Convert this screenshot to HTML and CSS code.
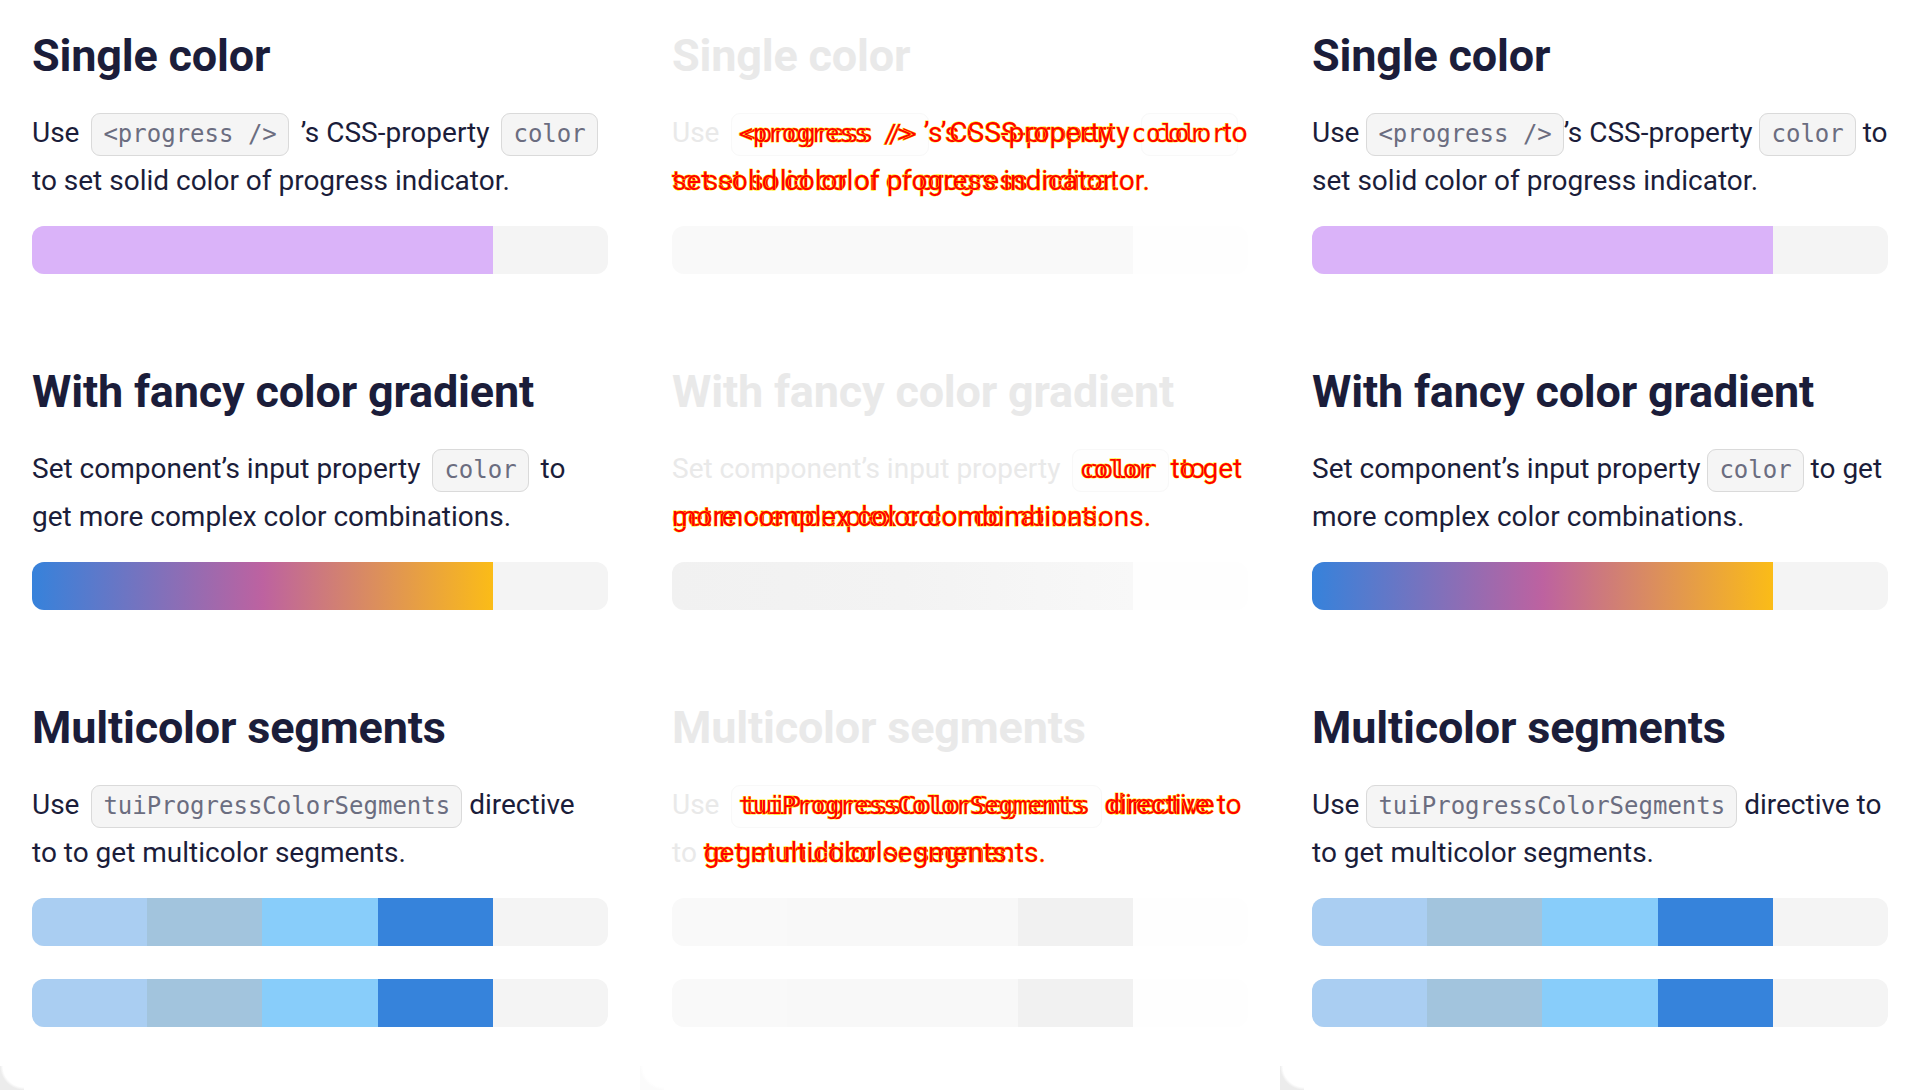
FILE: index.html
```html
<!DOCTYPE html>
<html lang="en">
<head>
<meta charset="utf-8">
<title>Progress colors — visual diff</title>
<link rel="stylesheet" href="styles.css">
</head>
<body>
<div class="screens">

  <!-- Expected -->
  <section class="panel">
    <div class="section">
      <h3 class="title">Single color</h3>
      <p class="desc">Use <code class="chip gap-both">&lt;progress /&gt;</code> ’s CSS-property <code class="chip gap-left">color</code><br>to set solid color of progress indicator.</p>
      <div class="bar"><div class="fill fill-solid"></div></div>
    </div>
    <div class="section">
      <h3 class="title">With fancy color gradient</h3>
      <p class="desc">Set component’s input property <code class="chip gap-both">color</code> to<br>get more complex color combinations.</p>
      <div class="bar"><div class="fill fill-gradient"></div></div>
    </div>
    <div class="section">
      <h3 class="title">Multicolor segments</h3>
      <p class="desc">Use <code class="chip gap-left">tuiProgressColorSegments</code> directive<br>to to get multicolor segments.</p>
      <div class="bar"><div class="fill segments"><i class="seg s1"></i><i class="seg s2"></i><i class="seg s3"></i><i class="seg s4"></i></div></div>
      <div class="bar bar-next"><div class="fill segments"><i class="seg s1"></i><i class="seg s2"></i><i class="seg s3"></i><i class="seg s4"></i></div></div>
    </div>
    <span class="corner"></span>
  </section>

  <!-- Diff -->
  <section class="panel panel-diff">
    <div class="section">
      <h3 class="title">Single color</h3>
      <p class="desc"><span class="same">Use</span> <code class="chip gap-both"><span class="red">&lt;progress /&gt;</span></code> <span class="red">’s CSS-property</span> <code class="chip gap-left"><span class="red">color</span></code><br><span class="red">to set solid color of progress indicator.</span><span class="ghost" aria-hidden="true"><span class="same">Use</span> <code class="chip"><span class="red">&lt;progress /&gt;</span></code><span class="red">’s CSS-property</span> <code class="chip"><span class="red">color</span></code> <span class="red">to</span><br><span class="red">set solid color of progress indicator.</span></span></p>
      <div class="bar"><div class="fill fill-solid"></div></div>
    </div>
    <div class="section">
      <h3 class="title">With fancy color gradient</h3>
      <p class="desc"><span class="same">Set component’s input property</span> <code class="chip gap-both"><span class="red">color</span></code> <span class="red">to</span><br><span class="red">get more complex color combinations.</span><span class="ghost" aria-hidden="true"><span class="same">Set component’s input property</span> <code class="chip"><span class="red">color</span></code> <span class="red">to get</span><br><span class="red">more complex color combinations.</span></span></p>
      <div class="bar"><div class="fill fill-gradient"></div></div>
    </div>
    <div class="section">
      <h3 class="title">Multicolor segments</h3>
      <p class="desc"><span class="same">Use</span> <code class="chip gap-left"><span class="red">tuiProgressColorSegments</span></code> <span class="red">directive</span><br><span class="same">to</span> <span class="red">to get multicolor segments.</span><span class="ghost" aria-hidden="true"><span class="same">Use</span> <code class="chip"><span class="red">tuiProgressColorSegments</span></code> <span class="red">directive to</span><br><span class="same">to</span> <span class="red">get multicolor segments.</span></span></p>
      <div class="bar"><div class="fill segments"><i class="seg s1"></i><i class="seg s2"></i><i class="seg s3"></i><i class="seg s4"></i></div></div>
      <div class="bar bar-next"><div class="fill segments"><i class="seg s1"></i><i class="seg s2"></i><i class="seg s3"></i><i class="seg s4"></i></div></div>
    </div>
    <span class="corner"></span>
  </section>

  <!-- Actual -->
  <section class="panel panel-actual">
    <div class="section">
      <h3 class="title">Single color</h3>
      <p class="desc">Use <code class="chip">&lt;progress /&gt;</code>’s CSS-property <code class="chip">color</code> to<br>set solid color of progress indicator.</p>
      <div class="bar"><div class="fill fill-solid"></div></div>
    </div>
    <div class="section">
      <h3 class="title">With fancy color gradient</h3>
      <p class="desc">Set component’s input property <code class="chip">color</code> to get<br>more complex color combinations.</p>
      <div class="bar"><div class="fill fill-gradient"></div></div>
    </div>
    <div class="section">
      <h3 class="title">Multicolor segments</h3>
      <p class="desc">Use <code class="chip">tuiProgressColorSegments</code> directive to<br>to get multicolor segments.</p>
      <div class="bar"><div class="fill segments"><i class="seg s1"></i><i class="seg s2"></i><i class="seg s3"></i><i class="seg s4"></i></div></div>
      <div class="bar bar-next"><div class="fill segments"><i class="seg s1"></i><i class="seg s2"></i><i class="seg s3"></i><i class="seg s4"></i></div></div>
    </div>
    <span class="corner"></span>
  </section>

</div>
</body>
</html>
```

FILE: styles.css
```css
html, body {
  margin: 0;
  padding: 0;
  background: #ffffff;
  overflow: hidden;
}

.screens {
  display: flex;
  width: 1920px;
  height: 1090px;
}

.panel {
  position: relative;
  flex: 0 0 640px;
  width: 640px;
  height: 1090px;
  box-sizing: border-box;
  padding: 31px 32px 0 32px;
  overflow: hidden;
  background: #ffffff;
  display: flex;
  flex-direction: column;
  gap: 92.67px;
  font-family: Roboto, "Liberation Sans", Arial, sans-serif;
  color: #1b1d3a;
}

.section {
  display: flex;
  flex-direction: column;
}

.title {
  margin: 0;
  font-size: 45px;
  line-height: 50px;
  font-weight: 700;
  letter-spacing: -0.2px;
  white-space: nowrap;
}

.desc {
  position: relative;
  margin: 29px 0 0 0;
  font-size: 28px;
  line-height: 46.67px;
  white-space: nowrap;
}

.chip {
  font-family: "DejaVu Sans Mono", "Liberation Mono", monospace;
  font-size: 24px;
  color: #6b6d80;
  background: #f5f5f5;
  border: 1.5px solid #dadada;
  border-radius: 9px;
  padding: 6px 11px 7px;
}

.gap-both { margin: 0 5px; }
.gap-left { margin-left: 5px; }

.bar {
  margin-top: 22px;
  height: 48px;
  border-radius: 12px;
  background: #f4f4f4;
  overflow: hidden;
}

.bar-next { margin-top: 33px; }

.fill {
  width: 80%;
  height: 100%;
}

.fill-solid { background: #dab3f9; }

.fill-gradient {
  background: linear-gradient(to right, #3682db 0%, #bd62a0 50%, #fbbc17 100%);
}

.segments { display: flex; }
.seg { flex: 1 1 0; }
.s1 { background: #aacef2; }
.s2 { background: #a2c4dd; }
.s3 { background: #88cdfa; }
.s4 { background: #3683db; }

.corner {
  position: absolute;
  left: 0;
  bottom: 0;
  width: 24px;
  height: 24px;
  background: radial-gradient(circle at 100% 0, #ffffff 21px, #ececec 24px);
}

/* ---------- diff panel ---------- */
.panel-diff .title { color: #e9e9e9; }
.panel-diff .same { color: #e9e9e9; }

.panel-diff .chip {
  background: #fefefe;
  border-color: #f8f8f8;
  color: #e9e9e9;
}

.red {
  color: #ff0000;
  -webkit-text-stroke: 0.8px #ffee00;
  paint-order: stroke fill;
}

.ghost {
  position: absolute;
  left: 0;
  top: 0;
  color: transparent;
}

.ghost .same { color: transparent; }

.ghost .chip {
  background: transparent;
  border-color: transparent;
}

.panel-diff .bar { background: #fefefe; }
.panel-diff .fill-solid { background: #f9f9f9; }
.panel-diff .fill-gradient {
  background: linear-gradient(to right, #f1f1f1 0%, #f3f3f3 50%, #f8f8f8 100%);
}
.panel-diff .s1 { background: #f9f9f9; }
.panel-diff .s2 { background: #f8f8f8; }
.panel-diff .s3 { background: #f8f8f8; }
.panel-diff .s4 { background: #f1f1f1; }

.panel-diff .corner {
  background: radial-gradient(circle at 100% 0, #ffffff 21px, #fbfbfb 24px);
}
```
